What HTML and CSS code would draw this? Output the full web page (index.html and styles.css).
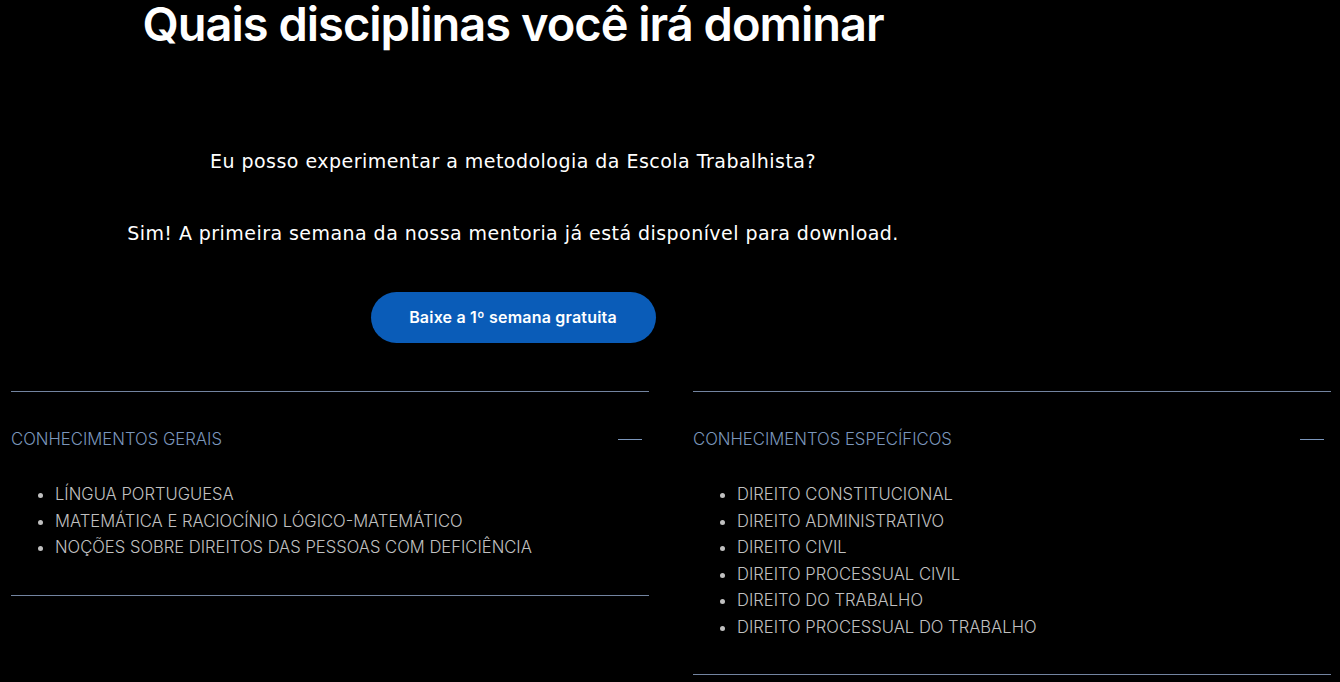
FILE: index.html
```html
<!DOCTYPE html>
<html lang="pt-BR">
<head>
  <meta charset="UTF-8" />
  <meta name="viewport" content="width=device-width, initial-scale=1.0"/>
  <title>Escola Trabalhista</title>
  <link rel="stylesheet" href="styles.css">
</head>
<body>

  <section class="intro">
    <h1>Quais disciplinas você irá dominar</h1>
    <p class="question">Eu posso experimentar a metodologia da Escola Trabalhista?</p>
    <p class="answer">Sim! A primeira semana da nossa mentoria já está disponível para download.</p>
    <a class="btn" href="#">Baixe a 1º semana gratuita</a>
  </section>

  <section class="subjects">
    <div class="accordion">
      <div class="acc-head">
        <span>CONHECIMENTOS GERAIS</span>
        <span class="acc-toggle"></span>
      </div>
      <ul class="acc-list">
        <li>LÍNGUA PORTUGUESA</li>
        <li>MATEMÁTICA E RACIOCÍNIO LÓGICO-MATEMÁTICO</li>
        <li>NOÇÕES SOBRE DIREITOS DAS PESSOAS COM DEFICIÊNCIA</li>
      </ul>
    </div>

    <div class="accordion">
      <div class="acc-head">
        <span>CONHECIMENTOS ESPECÍFICOS</span>
        <span class="acc-toggle"></span>
      </div>
      <ul class="acc-list">
        <li>DIREITO CONSTITUCIONAL</li>
        <li>DIREITO ADMINISTRATIVO</li>
        <li>DIREITO CIVIL</li>
        <li>DIREITO PROCESSUAL CIVIL</li>
        <li>DIREITO DO TRABALHO</li>
        <li>DIREITO PROCESSUAL DO TRABALHO</li>
      </ul>
    </div>
  </section>

</body>
</html>
```

FILE: styles.css
```css
* {
  box-sizing: border-box;
}

body {
  margin: 0;
  background: #000;
  color: #fff;
  font-family: 'DejaVu Sans', sans-serif;
}

.intro {
  width: 1026px;
  text-align: center;
}

h1 {
  margin: 0;
  font-family: Inter, sans-serif;
  font-weight: 600;
  font-size: 47px;
  letter-spacing: -1px;
  line-height: 48px;
}

.question {
  margin: 99px 0 0;
  font-size: 19px;
  letter-spacing: 0.47px;
  line-height: 28px;
}

.answer {
  margin: 44px 0 0;
  font-size: 19px;
  letter-spacing: 0.45px;
  line-height: 28px;
}

.btn {
  display: inline-block;
  margin-top: 45px;
  width: 285px;
  height: 51px;
  line-height: 51px;
  border-radius: 26px;
  background: #0a5cb8;
  color: #fff;
  text-decoration: none;
  font-family: Inter, sans-serif;
  font-weight: 600;
  font-size: 16px;
  letter-spacing: 0.2px;
}

.subjects {
  display: flex;
  align-items: flex-start;
  gap: 44px;
  padding: 48px 9px 0 11px;
}

.accordion {
  flex: 1;
  border-top: 1px solid #7384a0;
  border-bottom: 1px solid #7384a0;
  font-family: Inter, sans-serif;
}

.acc-head {
  display: flex;
  justify-content: space-between;
  align-items: center;
  padding: 36px 7px 0 0;
  color: #7b96bb;
  font-size: 16.7px;
  font-weight: 300;
  height: 58px;
}

.acc-toggle {
  width: 24px;
  height: 1px;
  background: #7b96bb;
}

.acc-list {
  margin: 0;
  padding: 31px 0 34px 44px;
  color: #c0c0c0;
  font-size: 16.6px;
  font-weight: 300;
  line-height: 26.5px;
}
```
